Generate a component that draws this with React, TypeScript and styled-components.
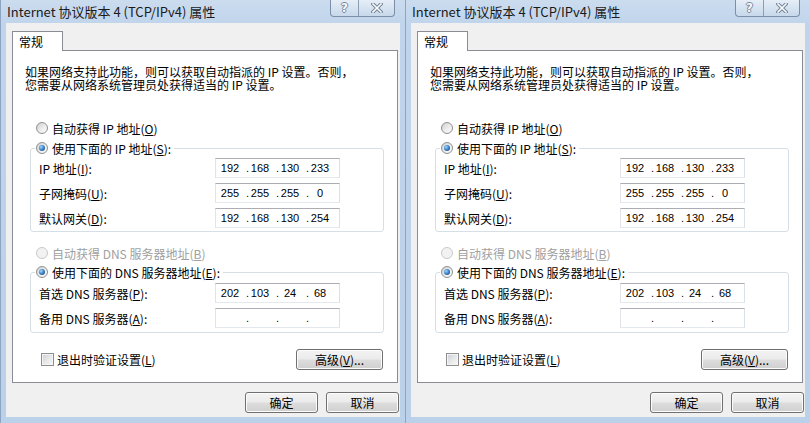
import React from "react";
import styled, { createGlobalStyle } from "styled-components";

const GlobalStyle = createGlobalStyle`
  html, body { margin: 0; padding: 0; background: #BFD3EA; }
  body {
    font-family: "Noto Sans CJK SC", "Noto Sans", sans-serif;
    font-size: 12px;
    color: #000;
  }
  * { box-sizing: border-box; }
`;

const Screen = styled.div`
  display: flex;
  width: 810px;
  height: 423px;
  overflow: hidden;
`;

const Window = styled.div`
  flex: 0 0 405px;
  width: 405px;
  height: 423px;
  display: flex;
  flex-direction: column;
  border-left: 1px solid #8EA5C2;
  background: linear-gradient(180deg, #CCDCEF 0px, #C0D4EB 24px, #BBD0E9 100%);
`;

const TitleBar = styled.div`
  height: 23px;
  flex: 0 0 23px;
  display: flex;
  align-items: flex-start;
  padding-left: 6px;
`;

const TitleText = styled.div`
  line-height: 23px;
  font-size: 13px;
  color: #1A1A1A;
  white-space: nowrap;
`;

const CaptionGroup = styled.div`
  margin-left: auto;
  margin-right: 10px;
  display: flex;
  height: 17px;
  border: 1px solid #7D8FA8;
  border-top: none;
  border-radius: 0 0 4px 4px;
  overflow: hidden;
  background: linear-gradient(180deg, #E6EEF7 0%, #D6E3F1 50%, #C7D8EB 100%);
`;

const CaptionButton = styled.div<{ $w: number; $divider?: boolean }>`
  width: ${(p) => p.$w}px;
  height: 16px;
  display: flex;
  align-items: center;
  justify-content: center;
  border-right: ${(p) => (p.$divider ? "1px solid #8C9DB3" : "none")};
`;

const HelpGlyph = styled.span`
  font-family: "DejaVu Sans", sans-serif;
  font-weight: bold;
  font-size: 12px;
  line-height: 12px;
  color: #F6F8FB;
  text-shadow: 1px 0 0 #7A889B, -1px 0 0 #7A889B, 0 1px 0 #7A889B, 0 -1px 0 #7A889B;
`;

const Client = styled.div`
  flex: 1;
  margin: 0 5px 6px 5px;
  background: #F0F0F0;
  padding: 8px 1px 0 6px;
  display: flex;
  flex-direction: column;
`;

const TabStrip = styled.div`
  display: flex;
  height: 20px;
  margin-bottom: -1px;
`;

const Tab = styled.div`
  position: relative;
  z-index: 1;
  width: 51px;
  height: 20px;
  border: 1px solid #898C95;
  border-bottom: none;
  background: #fff;
  padding-left: 6px;
  line-height: 19px;
`;

const Panel = styled.div`
  width: 386px;
  height: 333px;
  border: 1px solid #898C95;
  background: #fff;
  display: flex;
  flex-direction: column;
`;

const Description = styled.div`
  margin: 14px 0 0 12px;
  display: flex;
  flex-direction: column;
`;

const DescLine = styled.div`
  height: 13px;
  line-height: 13px;
  white-space: nowrap;
`;

const RadioRow = styled.div<{ $top: number; $disabled?: boolean }>`
  display: flex;
  align-items: center;
  height: 16px;
  margin: ${(p) => p.$top}px 0 0 23px;
  color: ${(p) => (p.$disabled ? "#A0A0A0" : "#000")};
  white-space: nowrap;
`;

const RadioCircle = styled.span<{ $disabled?: boolean }>`
  width: 12px;
  height: 12px;
  flex: 0 0 12px;
  border-radius: 50%;
  border: 1px solid ${(p) => (p.$disabled ? "#C9C9C9" : "#8D8F91")};
  background: ${(p) =>
    p.$disabled ? "#F2F2F2" : "linear-gradient(135deg, #CFCFCF 0%, #EDEDED 55%, #FBFBFB 100%)"};
  display: flex;
  align-items: center;
  justify-content: center;
  margin-right: 4px;
`;

const RadioDot = styled.span`
  width: 6px;
  height: 6px;
  border-radius: 50%;
  background: radial-gradient(circle at 35% 35%, #A8D8FB 0%, #3F88CC 45%, #143B69 100%);
`;

const GroupBox = styled.fieldset<{ $top: number; $padTop: number; $padBottom: number }>`
  margin: ${(p) => p.$top}px 0 0 17px;
  min-width: 0;
  width: 354px;
  border: 1px solid #D5DFE5;
  border-radius: 3px;
  padding: ${(p) => p.$padTop}px 0 ${(p) => p.$padBottom}px 0;
`;

const Legend = styled.legend`
  display: flex;
  align-items: center;
  height: 16px;
  margin-left: 4px;
  padding: 0 3px 0 1px;
  white-space: nowrap;
`;

const FieldRows = styled.div`
  display: flex;
  flex-direction: column;
  gap: 5px;
  padding-left: 8px;
`;

const FieldRow = styled.div`
  display: grid;
  grid-template-columns: 176px 125px;
  align-items: center;
  height: 20px;
`;

const FieldLabel = styled.span`
  white-space: nowrap;
`;

const IpBox = styled.div`
  height: 20px;
  border: 1px solid;
  border-color: #ABADB3 #DBDFE6 #E3E9EF #E2E3EA;
  background: #fff;
  display: flex;
  align-items: center;
  padding-left: 4px;
  font-family: "Liberation Sans", Arial, sans-serif;
  font-size: 11px;
`;

const Octet = styled.span`
  width: 20px;
  text-align: center;
`;

const Dot = styled.span`
  width: 10px;
  padding-left: 6px;
`;

const U = styled.span`
  text-decoration: underline;
  text-underline-offset: 1px;
`;

const BottomRow = styled.div`
  margin: 16px 14px 0 28px;
  height: 21px;
  display: flex;
  align-items: center;
  justify-content: space-between;
`;

const CheckLabel = styled.label`
  display: flex;
  align-items: center;
  white-space: nowrap;
`;

const CheckBox = styled.span`
  width: 13px;
  height: 13px;
  border: 1px solid #8F8F8F;
  background: linear-gradient(135deg, #C9CDD2 0%, #E6E7E9 50%, #F8F8F8 100%);
  box-shadow: inset 0 0 0 1px #F4F4F4;
  margin-right: 3px;
`;

const PushButton = styled.div<{ $w: number }>`
  width: ${(p) => p.$w}px;
  height: 21px;
  border: 1px solid #707070;
  border-radius: 3px;
  background: linear-gradient(180deg, #F3F3F3 0%, #EBEBEB 48%, #DDDDDD 52%, #CFCFCF 100%);
  box-shadow: inset 0 0 0 1px #FCFCFC;
  display: flex;
  align-items: center;
  justify-content: center;
  white-space: nowrap;
  line-height: 19px;
`;

const Footer = styled.div`
  display: flex;
  justify-content: flex-end;
  gap: 8px;
  margin-top: 9px;
`;

type Row = { label: string; key: string; value: string[] };

const ipRows: Row[] = [
  { label: "IP 地址", key: "I", value: ["192", "168", "130", "233"] },
  { label: "子网掩码", key: "U", value: ["255", "255", "255", "0"] },
  { label: "默认网关", key: "D", value: ["192", "168", "130", "254"] },
];

const dnsRows: Row[] = [
  { label: "首选 DNS 服务器", key: "P", value: ["202", "103", "24", "68"] },
  { label: "备用 DNS 服务器", key: "A", value: ["", "", "", ""] },
];

function Accel({ text, k, colon }: { text: string; k: string; colon?: boolean }) {
  return (
    <>
      {text}(<U>{k}</U>){colon ? ":" : ""}
    </>
  );
}

function IpField({ value }: { value: string[] }) {
  return (
    <IpBox>
      {value.map((v, i) => (
        <React.Fragment key={i}>
          {i > 0 && <Dot>.</Dot>}
          <Octet>{v}</Octet>
        </React.Fragment>
      ))}
    </IpBox>
  );
}

function Radio({ checked, disabled }: { checked?: boolean; disabled?: boolean }) {
  return <RadioCircle $disabled={disabled}>{checked && <RadioDot />}</RadioCircle>;
}

function Rows({ rows }: { rows: Row[] }) {
  return (
    <FieldRows>
      {rows.map((r) => (
        <FieldRow key={r.key}>
          <FieldLabel>
            <Accel text={r.label} k={r.key} colon />
          </FieldLabel>
          <IpField value={r.value} />
        </FieldRow>
      ))}
    </FieldRows>
  );
}

function CloseGlyph() {
  return (
    <svg width="12" height="10" viewBox="0 0 12 10">
      <path d="M2 1 L10 9 M10 1 L2 9" stroke="#74849A" strokeWidth="3.6" strokeLinecap="square" />
      <path d="M2 1 L10 9 M10 1 L2 9" stroke="#FBFCFE" strokeWidth="1.6" strokeLinecap="square" />
    </svg>
  );
}

function Dialog() {
  return (
    <Window>
      <TitleBar>
        <TitleText>Internet 协议版本 4 (TCP/IPv4) 属性</TitleText>
        <CaptionGroup>
          <CaptionButton $w={28} $divider>
            <HelpGlyph>?</HelpGlyph>
          </CaptionButton>
          <CaptionButton $w={35}>
            <CloseGlyph />
          </CaptionButton>
        </CaptionGroup>
      </TitleBar>
      <Client>
        <TabStrip>
          <Tab>常规</Tab>
        </TabStrip>
        <Panel>
          <Description>
            <DescLine>如果网络支持此功能，则可以获取自动指派的 IP 设置。否则，</DescLine>
            <DescLine>您需要从网络系统管理员处获得适当的 IP 设置。</DescLine>
          </Description>
          <RadioRow $top={29}>
            <Radio />
            <Accel text="自动获得 IP 地址" k="O" />
          </RadioRow>
          <GroupBox $top={4} $padTop={2} $padBottom={3}>
            <Legend>
              <Radio checked />
              <Accel text="使用下面的 IP 地址" k="S" colon />
            </Legend>
            <Rows rows={ipRows} />
          </GroupBox>
          <RadioRow $top={13} $disabled>
            <Radio disabled />
            <Accel text="自动获得 DNS 服务器地址" k="B" />
          </RadioRow>
          <GroupBox $top={3} $padTop={3} $padBottom={4}>
            <Legend>
              <Radio checked />
              <Accel text="使用下面的 DNS 服务器地址" k="E" colon />
            </Legend>
            <Rows rows={dnsRows} />
          </GroupBox>
          <BottomRow>
            <CheckLabel>
              <CheckBox />
              <Accel text="退出时验证设置" k="L" />
            </CheckLabel>
            <PushButton $w={87}>
              高级(<U>V</U>)...
            </PushButton>
          </BottomRow>
        </Panel>
        <Footer>
          <PushButton $w={73}>确定</PushButton>
          <PushButton $w={73}>取消</PushButton>
        </Footer>
      </Client>
    </Window>
  );
}

export default function App() {
  return (
    <>
      <GlobalStyle />
      <Screen>
        <Dialog />
        <Dialog />
      </Screen>
    </>
  );
}
